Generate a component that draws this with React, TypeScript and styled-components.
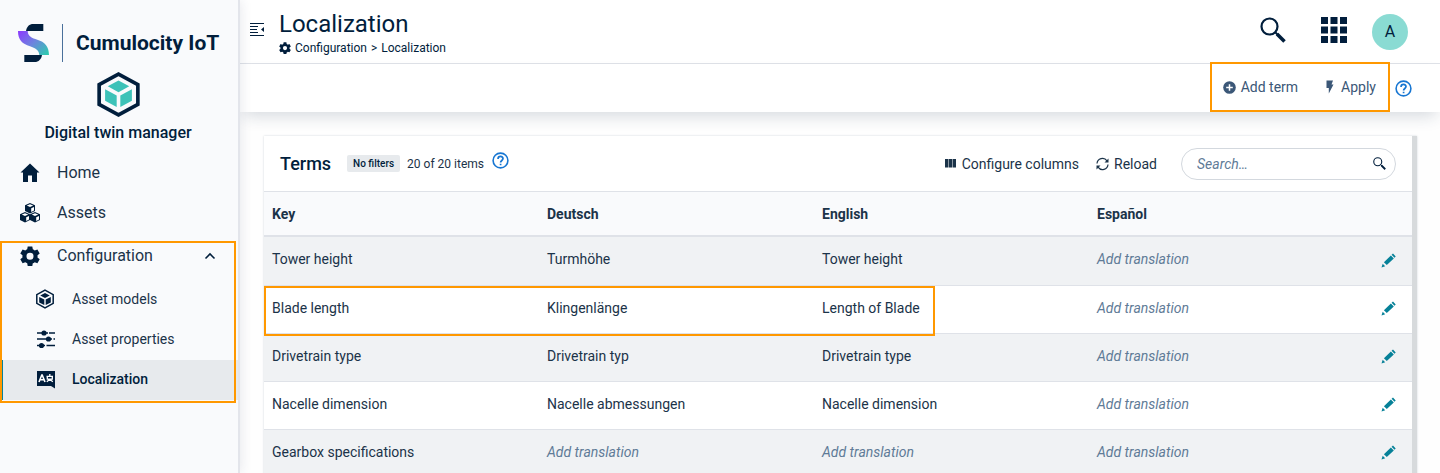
import React from "react";
import styled, { createGlobalStyle, css } from "styled-components";

const color = {
  navy: "#011e3c",
  text: "#1b3349",
  action: "#3b5777",
  muted: "#5f7b97",
  line: "#dfe2e8",
  panel: "#f9fafc",
  stripe: "#f0f2f4",
  active: "#e7eaed",
  teal: "#068198",
  mint: "#3dc2b8",
  blue: "#1776d2",
  mark: "#ff9800",
};

const GlobalStyle = createGlobalStyle`
  *, *::before, *::after { box-sizing: border-box; }
  body {
    margin: 0;
    background: #fff;
    color: ${color.text};
    font-family: Roboto, "Liberation Sans", sans-serif;
    font-size: 14px;
    line-height: 20px;
  }
  button, input { font: inherit; color: inherit; }
  button { border: 0; padding: 0; background: none; cursor: pointer; }
  a { color: inherit; text-decoration: none; }
  svg { display: block; flex: none; }
  h1, h2, p { margin: 0; font-weight: 400; }
`;

/* ---------- highlight frame ---------- */

const Frame = styled.span`
  position: absolute;
  z-index: 2;
  border: 2px solid ${color.mark};
  pointer-events: none;
`;

const NavFrame = styled(Frame)`
  inset: 5px 2px -3px 0;
`;

const ActionFrame = styled(Frame)`
  inset: -2px 0 0 0;
`;

const RowFrame = styled(Frame)`
  top: 0;
  left: 0;
  bottom: -3px;
  width: calc(300% - 154px);
`;

/* ---------- shell ---------- */

const Shell = styled.div`
  display: flex;
  height: 100vh;
  overflow: hidden;
`;

const Sidebar = styled.aside`
  position: relative;
  z-index: 3;
  flex: none;
  width: 240px;
  background: ${color.panel};
  border-right: 2px solid #e3e5eb;
  box-shadow: 0 0 12px rgba(30, 45, 80, 0.12);
`;

const Brand = styled.div`
  display: flex;
  align-items: center;
  gap: 13px;
  padding: 24px 18px 0;
  color: ${color.navy};
  font-size: 21px;
  font-weight: 700;
  white-space: nowrap;
`;

const BrandRule = styled.span`
  width: 1px;
  height: 38px;
  background: #4a709b;
`;

const AppBadge = styled.div`
  display: flex;
  flex-direction: column;
  align-items: center;
  gap: 6px;
  padding: 10px 2px 10px 0;
  color: ${color.navy};
  font-size: 16px;
  font-weight: 500;
`;

const NavItem = css<{ $level?: number; $active?: boolean }>`
  display: flex;
  align-items: center;
  gap: 17px;
  width: 100%;
  height: 40px;
  padding: ${(p) => (p.$level === 2 ? "0 0 2px 35px" : "0 0 0 20px")};
  color: ${(p) => (p.$active ? color.navy : color.text)};
  font-size: ${(p) => (p.$level === 2 ? 14 : 16)}px;
  font-weight: ${(p) => (p.$active ? 500 : 400)};
  background: ${(p) => (p.$active ? color.active : "transparent")};
  box-shadow: ${(p) => (p.$active ? `inset 3px 0 ${color.teal}` : "none")};
  text-align: left;
`;

const NavLink = styled.a<{ $level?: number; $active?: boolean }>`
  ${NavItem}
`;

const NavToggle = styled.button<{ $level?: number; $active?: boolean }>`
  ${NavItem}
  padding-right: 22px;
`;

const ToggleLabel = styled.span`
  flex: 1;
`;

const NavGroup = styled.div`
  position: relative;
  margin-top: 3px;
`;

const SubNav = styled.div`
  padding-top: 4px;
`;

const Main = styled.div`
  display: flex;
  flex: 1;
  flex-direction: column;
  min-width: 0;
`;

/* ---------- top bars ---------- */

const Header = styled.header`
  display: flex;
  align-items: center;
  height: 64px;
  padding: 0 32px 0 10px;
  border-bottom: 1px solid ${color.line};
  background: #fff;
`;

const MenuButton = styled.button`
  margin: 0 15px 4px 0;
`;

const Heading = styled.div`
  flex: 1;
  padding-top: 3px;
  color: ${color.navy};
`;

const Title = styled.h1`
  font-size: 24px;
  line-height: 30px;
`;

const Breadcrumb = styled.nav`
  display: flex;
  align-items: center;
  gap: 4px;
  font-size: 12px;
  line-height: 18px;
`;

const HeaderTools = styled.div`
  display: flex;
  align-items: center;
  color: ${color.navy};
`;

const ToolButton = styled.button<{ $space: number }>`
  margin: 0 ${(p) => p.$space}px 4px 0;
`;

const Avatar = styled.button`
  width: 36px;
  height: 36px;
  border-radius: 50%;
  background: #8adbd3;
  color: ${color.navy};
  font-size: 16px;
`;

const Toolbar = styled.div`
  position: relative;
  z-index: 1;
  display: flex;
  align-items: center;
  justify-content: flex-end;
  gap: 5px;
  height: 48px;
  padding-right: 28px;
  background: #fff;
  box-shadow: 0 8px 16px -4px rgba(30, 50, 80, 0.18);
`;

const ActionGroup = styled.div`
  position: relative;
  display: flex;
  align-items: center;
  align-self: stretch;
  gap: 26px;
  padding: 0 14px 2px 13px;
`;

const TextButton = styled.button<{ $tone?: string }>`
  display: flex;
  align-items: center;
  gap: 5px;
  color: ${(p) => p.$tone ?? color.text};
`;

const HelpButton = styled.button<{ $raised?: boolean }>`
  color: ${color.blue};
  margin-bottom: ${(p) => (p.$raised ? 6 : 0)}px;
`;

/* ---------- terms card ---------- */

const Content = styled.main`
  flex: 1;
  min-height: 0;
  padding: 24px 23px 0 24px;
  overflow: hidden;
  background: #fefefe;
`;

const Card = styled.section`
  border-right: 5px solid #d7dadc;
  background: #fff;
  box-shadow: 0 0 2px rgba(30, 50, 80, 0.2);
`;

const CardHeader = styled.div`
  display: flex;
  align-items: center;
  height: 56px;
  padding: 0 16px;
  border-bottom: 1px solid ${color.line};
`;

const CardTitle = styled.h2`
  margin-right: 16px;
  color: ${color.navy};
  font-size: 18px;
  font-weight: 500;
`;

const FilterTag = styled.span`
  margin-right: 7px;
  padding: 0 6px;
  border-radius: 2px;
  background: ${color.active};
  color: ${color.navy};
  font-size: 10px;
  font-weight: 500;
  line-height: 17px;
`;

const Count = styled.p`
  margin-right: 8px;
  font-size: 12px;
`;

const CardTools = styled.div`
  display: flex;
  align-items: center;
  gap: 17px;
  margin-left: auto;
`;

const SearchBox = styled.label`
  display: flex;
  align-items: center;
  width: 215px;
  height: 32px;
  margin-left: 7px;
  padding: 0 9px 0 15px;
  border: 1px solid #d3d8de;
  border-radius: 16px;
  color: ${color.navy};
`;

const SearchInput = styled.input`
  flex: 1;
  min-width: 0;
  padding: 0;
  border: 0;
  outline: 0;
  background: none;
  &::placeholder {
    color: ${color.muted};
    font-style: italic;
    opacity: 1;
  }
`;

const Table = styled.table`
  width: 100%;
  table-layout: fixed;
  border-collapse: separate;
  border-spacing: 0;
`;

const HeadCell = styled.th<{ $narrow?: boolean }>`
  width: ${(p) => (p.$narrow ? "48px" : "auto")};
  height: 45px;
  padding: 0 8px;
  border-bottom: 2px solid ${color.line};
  background: ${color.panel};
  font-weight: 700;
  text-align: left;
`;

const Row = styled.tr`
  background: #fff;
  &:nth-child(odd) {
    background: ${color.stripe};
  }
`;

const Cell = styled.td<{ $empty?: boolean }>`
  position: relative;
  height: 48px;
  padding: 0 8px 4px;
  border-bottom: 1px solid ${color.line};
  color: ${(p) => (p.$empty ? color.muted : color.text)};
  font-style: ${(p) => (p.$empty ? "italic" : "normal")};
  ${Row}:first-child & {
    height: 49px;
  }
`;

const EditButton = styled.button`
  display: block;
  margin: 2px auto 0;
  color: ${color.teal};
`;

/* ---------- icons ---------- */

const LogoMark = () => (
  <svg width="31" height="38" viewBox="0 0 93 114" aria-hidden="true">
    <defs>
      <linearGradient id="wave" x1="0" y1="0.1" x2="1" y2="0.9">
        <stop offset="0" stopColor="#8a3ffc" />
        <stop offset="0.5" stopColor="#6c86dd" />
        <stop offset="1" stopColor="#2fc9b0" />
      </linearGradient>
    </defs>
    <path fill={color.navy} d="M24 21C26 8 34 0 46 0h30v21z" />
    <path fill="url(#wave)" d="M0 21h29c1 17 13 21 29 26 22 7 35 19 35 46H64c-1-15-12-20-28-26C12 59 0 48 0 21z" />
    <path fill={color.navy} d="M19 93h53c-2 13-10 21-22 21H19z" />
  </svg>
);

const TwinLogo = () => (
  <svg width="43" height="45" viewBox="0 0 129 136" aria-hidden="true">
    <path fill="none" stroke={color.navy} strokeWidth="11" d="M64.500 6.500L123 38v60l-58.500 31.500L6 98V38z" />
    <path fill={color.mint} d="M32 43l32.500-17L97 43 64.500 61zM24 52l35 19v35L24 87zM105 52L70 71v35l35-19z" />
  </svg>
);

const HomeIcon = () => (
  <svg width="20" height="20" viewBox="0 0 20 20" fill={color.navy} aria-hidden="true">
    <path d="M10 .5l9.500 9H17V19h-5v-6.500H8V19H3V9.500H.5z" />
  </svg>
);

const CubesIcon = () => (
  <svg width="20" height="20" viewBox="0 0 20 20" aria-hidden="true">
    {[[5, 0], [0, 9], [10, 9]].map(([x, y]) => (
      <g key={`${x}-${y}`} transform={`translate(${x} ${y})`}>
        <path fill={color.navy} d="M5 0l5 2.200v5.800L5 10.500 0 8V2.200z" />
        <path fill="#fff" d="M5 1.200l3.200 1.400L5 4 1.800 2.600zM6.200 5.200L9 4v3.400L6.200 8.900z" />
      </g>
    ))}
  </svg>
);

const GearIcon = ({ size }: { size: number }) => (
  <svg width={size} height={size} viewBox="2 2 20 20" fill={color.navy} aria-hidden="true">
    <path
      fillRule="evenodd"
      d="M9.700 2.500h4.600l.5 2.800c.7.300 1.300.6 1.900 1.100l2.700-1 2.300 4-2.200 1.800a7 7 0 0 1 0 2.200l2.200 1.800-2.300 4-2.700-1c-.6.500-1.200.8-1.900 1.100l-.5 2.700H9.700l-.5-2.700a7 7 0 0 1-1.900-1.100l-2.700 1-2.300-4 2.200-1.800a7 7 0 0 1 0-2.200L2.300 9.400l2.300-4 2.700 1c.6-.5 1.200-.8 1.900-1.100zM12 8.700a3.500 3.500 0 1 0 0 7 3.500 3.500 0 0 0 0-7z"
    />
  </svg>
);

const ChevronUp = () => (
  <svg width="12" height="8" viewBox="0 0 12 8" fill="none" stroke={color.navy} strokeWidth="1.600" aria-hidden="true">
    <path d="M1.500 6.500L6 2l4.500 4.500" />
  </svg>
);

const ModelIcon = () => (
  <svg width="20" height="20" viewBox="0 0 20 20" aria-hidden="true">
    <path fill="none" stroke={color.navy} strokeWidth="1.500" d="M10 1.200l8.200 4.400v8.800L10 18.800l-8.200-4.400V5.600z" />
    <path fill={color.navy} d="M5.200 6.500L10 4l4.800 2.500L10 9zM4.200 8l5.100 2.600v5.400l-5.100-2.600zM15.800 8l-5.100 2.600v5.400l5.100-2.600z" />
  </svg>
);

const SlidersIcon = () => (
  <svg width="20" height="20" viewBox="0 0 20 20" fill={color.navy} aria-hidden="true">
    <path stroke={color.navy} strokeWidth="1.500" d="M2 4h11M14 4h6M2 10h15M18.500 10h1.500M2 16.500h8M11.500 16.500h8.500" />
    <circle cx="9" cy="4" r="2.600" />
    <circle cx="13.500" cy="10" r="2.600" />
    <circle cx="6.500" cy="16.500" r="2.600" />
  </svg>
);

const LanguageIcon = () => (
  <svg width="20" height="20" viewBox="0 0 20 20" aria-hidden="true">
    <path fill={color.navy} d="M2 2h18v17.500L16 17H2z" />
    <path fill="none" stroke="#fff" strokeWidth="1.600" d="M4 13l2.800-7h.4L10 13M5 10.800h4" />
    <path fill="none" stroke="#fff" strokeWidth="1.300" d="M11.500 7.300h6.500M14.800 5v2M17.300 7.500v2.700h-5V7.500M14.800 10.200l-3 2.500M14.800 10.200l3 2.500" />
  </svg>
);

const OutdentIcon = () => (
  <svg width="14" height="14" viewBox="0 0 14 14" fill={color.navy} aria-hidden="true">
    <path d="M0 0h14v1H0zM0 3h8v1H0zM0 6h7v1H0zM0 9h8v1H0zM0 12h14v1H0zM14 4v5l-3-2.500z" />
  </svg>
);

const SearchIcon = ({ size }: { size: number }) => (
  <svg width={size} height={size} viewBox="0 0 26 26" fill="none" stroke={color.navy} aria-hidden="true">
    <circle cx="9.500" cy="9.500" r="8" strokeWidth="2.200" />
    <path strokeWidth="2" d="M15 15l3 3" />
    <path strokeWidth="3.600" d="M17 17l7.500 7.500" />
  </svg>
);

const GridIcon = () => (
  <svg width="26" height="26" viewBox="0 0 26 26" fill={color.navy} aria-hidden="true">
    {[0, 9.5, 19].map((y) => [0, 9.5, 19].map((x) => <rect key={`${x}-${y}`} x={x} y={y} width="7" height="7" />))}
  </svg>
);

const PlusIcon = () => (
  <svg width="13" height="13" viewBox="0 0 13 13" aria-hidden="true">
    <circle cx="6.500" cy="6.500" r="6.300" fill={color.action} />
    <path stroke="#fff" strokeWidth="1.500" d="M6.500 3.200v6.600M3.200 6.500h6.600" />
  </svg>
);

const BoltIcon = () => (
  <svg width="12" height="14" viewBox="0 0 12 14" fill={color.action} aria-hidden="true">
    <path d="M2.500.5h6.500L7.500 4.500h2L4.800 13.500V8H2.500z" />
  </svg>
);

const HelpIcon = () => (
  <svg width="17" height="17" viewBox="0 0 17 17" fill="none" stroke="currentColor" aria-hidden="true">
    <circle cx="8.500" cy="8.500" r="7.400" strokeWidth="1.600" />
    <path strokeWidth="1.700" d="M6 6.900c0-3.200 5-3.200 5-.3 0 1.900-2.400 1.900-2.400 3.900M8.600 11.700v1.600" />
  </svg>
);

const ColumnsIcon = () => (
  <svg width="12" height="12" viewBox="0 0 12 12" fill={color.text} aria-hidden="true">
    <path d="M0 1h3v8.500H0zM4 1h3v8.500H4zM8 1h3v8.500H8z" />
    <path fillOpacity="0.5" d="M3 1h1v8.500H3zM7 1h1v8.500H7z" />
  </svg>
);

const ReloadIcon = () => (
  <svg width="13" height="14" viewBox="0 0 13 14" fill="none" stroke={color.text} strokeWidth="1.200" aria-hidden="true">
    <path d="M1 6.500A5.500 5.500 0 0 1 11 3.800M12 7.500A5.500 5.500 0 0 1 2 10.200" />
    <path fill={color.text} stroke="none" d="M12.500 1.500V5.500H8.500zM.5 12.500V8.500H4.500z" />
  </svg>
);

const PencilIcon = () => (
  <svg width="15" height="15" viewBox="0 0 15 15" fill="currentColor" aria-hidden="true">
    <path d="M12 .5l2.700 2.900-1.200 1.300-2.900-2.900zM9.900 2.500l2.900 2.900-7 6.700-2.900-2.900zM1.700 10.700l2.500 2.500-3.700 1.300z" />
  </svg>
);

/* ---------- data ---------- */

const languages = ["Key", "Deutsch", "English", "Español"];

const terms: { values: (string | null)[]; framed?: boolean }[] = [
  { values: ["Tower height", "Turmhöhe", "Tower height", null] },
  { values: ["Blade length", "Klingenlänge", "Length of Blade", null], framed: true },
  { values: ["Drivetrain type", "Drivetrain typ", "Drivetrain type", null] },
  { values: ["Nacelle dimension", "Nacelle abmessungen", "Nacelle dimension", null] },
  { values: ["Gearbox specifications", null, null, null] },
];

export default function App() {
  return (
    <>
      <GlobalStyle />
      <Shell>
        <Sidebar>
          <Brand>
            <LogoMark />
            <BrandRule />
            <span>Cumulocity IoT</span>
          </Brand>
          <AppBadge>
            <TwinLogo />
            <span>Digital twin manager</span>
          </AppBadge>
          <nav aria-label="Main">
            <NavLink href="#home"><HomeIcon />Home</NavLink>
            <NavLink href="#assets"><CubesIcon />Assets</NavLink>
            <NavGroup>
              <NavToggle type="button" aria-expanded="true">
                <GearIcon size={20} />
                <ToggleLabel>Configuration</ToggleLabel>
                <ChevronUp />
              </NavToggle>
              <SubNav>
                <NavLink href="#models" $level={2}><ModelIcon />Asset models</NavLink>
                <NavLink href="#properties" $level={2}><SlidersIcon />Asset properties</NavLink>
                <NavLink href="#localization" $level={2} $active aria-current="page"><LanguageIcon />Localization</NavLink>
              </SubNav>
              <NavFrame />
            </NavGroup>
          </nav>
        </Sidebar>

        <Main>
          <Header>
            <MenuButton type="button" aria-label="Collapse navigation"><OutdentIcon /></MenuButton>
            <Heading>
              <Title>Localization</Title>
              <Breadcrumb aria-label="Breadcrumb">
                <GearIcon size={12} />
                <a href="#configuration">Configuration</a>
                <span>&gt;</span>
                <span>Localization</span>
              </Breadcrumb>
            </Heading>
            <HeaderTools>
              <ToolButton type="button" $space={35} aria-label="Search"><SearchIcon size={26} /></ToolButton>
              <ToolButton type="button" $space={25} aria-label="Applications"><GridIcon /></ToolButton>
              <Avatar type="button">A</Avatar>
            </HeaderTools>
          </Header>

          <Toolbar>
            <ActionGroup>
              <TextButton type="button" $tone={color.action}><PlusIcon />Add term</TextButton>
              <TextButton type="button" $tone={color.action}><BoltIcon />Apply</TextButton>
              <ActionFrame />
            </ActionGroup>
            <HelpButton type="button" aria-label="Help"><HelpIcon /></HelpButton>
          </Toolbar>

          <Content>
            <Card>
              <CardHeader>
                <CardTitle>Terms</CardTitle>
                <FilterTag>No filters</FilterTag>
                <Count>20 of 20 items</Count>
                <HelpButton type="button" $raised aria-label="About terms"><HelpIcon /></HelpButton>
                <CardTools>
                  <TextButton type="button"><ColumnsIcon />Configure columns</TextButton>
                  <TextButton type="button"><ReloadIcon />Reload</TextButton>
                  <SearchBox>
                    <SearchInput type="search" placeholder="Search…" aria-label="Search terms" />
                    <SearchIcon size={13} />
                  </SearchBox>
                </CardTools>
              </CardHeader>
              <Table>
                <thead>
                  <tr>
                    {languages.map((name) => <HeadCell key={name} scope="col">{name}</HeadCell>)}
                    <HeadCell $narrow aria-label="Edit" />
                  </tr>
                </thead>
                <tbody>
                  {terms.map((term) => (
                    <Row key={term.values[0]}>
                      {term.values.map((value, i) => (
                        <Cell key={languages[i]} $empty={value === null}>
                          {value ?? "Add translation"}
                          {term.framed && i === 0 && <RowFrame />}
                        </Cell>
                      ))}
                      <Cell>
                        <EditButton type="button" aria-label={`Edit ${term.values[0]}`}><PencilIcon /></EditButton>
                      </Cell>
                    </Row>
                  ))}
                </tbody>
              </Table>
            </Card>
          </Content>
        </Main>
      </Shell>
    </>
  );
}
